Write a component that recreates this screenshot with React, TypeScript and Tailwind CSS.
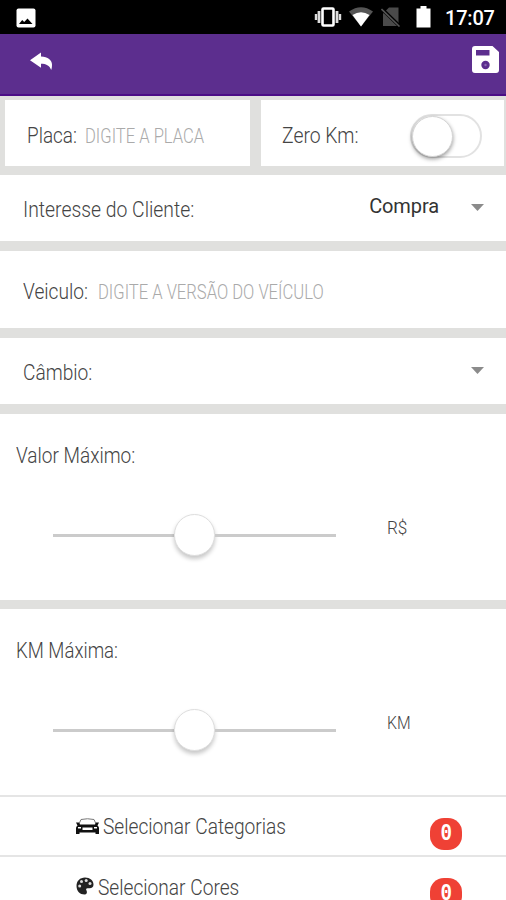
import type { ReactNode } from "react";

const condensed = "inline-block origin-left whitespace-nowrap font-light";

function Text({ className, children }: { className: string; children: ReactNode }) {
  return <span className={`${condensed} ${className}`}>{children}</span>;
}

function StatusBar() {
  return (
    <div className="flex h-[34px] shrink-0 items-center bg-black pl-4 pr-[11px] text-white">
      <svg className="mt-[1px] h-5 w-5" viewBox="0 0 20 20">
        <rect x="0.5" y="0.5" width="19" height="19" rx="2" fill="#fff" />
        <path d="M3 16 L6.2 12 L8.2 14 L11.5 10.5 L16.5 16 Z" fill="#000" />
      </svg>
      <div className="ml-auto flex items-center">
        <svg className="h-5 w-[28px]" viewBox="0 0 28 20">
          <rect x="8.5" y="1.5" width="11" height="17" rx="1" fill="none" stroke="#fff" strokeWidth="2.6" />
          <path d="M5 4V16M23 4V16" stroke="#ddd" strokeWidth="2.8" />
          <path d="M2 7V13M26 7V13" stroke="#ddd" strokeWidth="2.4" />
        </svg>
        <svg className="ml-[7px] h-5 w-6" viewBox="0 0 24 20">
          <path d="M0 4.5 Q12 -4 24 4.5 L12 19.5Z" fill="#555" />
          <path d="M3.5 8 Q12 2.5 20.5 8 L12 19.5Z" fill="#fff" />
        </svg>
        <svg className="ml-[8px] h-5 w-5" viewBox="0 0 20 20">
          <path d="M2 6.5 L8 0.5 H17.500 V19 H2Z" fill="#4a4a4a" />
          <path d="M1 2 L19 19.500" stroke="#000" strokeWidth="3.5" />
          <path d="M0.500 2 L18.500 19.500" stroke="#555" strokeWidth="1.600" />
        </svg>
        <svg className="ml-[15px] h-[22px] w-[15px]" viewBox="0 0 15 22">
          <path d="M0.500 2.500H4.500V0H10.500V2.500H14.500V21.500H0.500Z" fill="#fff" />
        </svg>
        <span className="ml-[14px] mt-[2px] w-[50px] whitespace-nowrap text-[20px] font-medium leading-6 tracking-[-0.2px]">17:07</span>
      </div>
    </div>
  );
}

function Header() {
  return (
    <header className="flex h-[62px] shrink-0 items-start justify-between border-b-2 border-[#4b0d86] bg-[#5c2e8e] pl-[30px] pr-[7px]">
      <svg className="mt-[18px] h-[19px] w-[23px]" viewBox="0 0 23 19">
        <path d="M0 8.300 L11 0.500 V4.500 C18 4.800 22 8.500 22 12.500 C22 14.500 21.800 16.500 21.200 18 C19.500 13.500 16 11.800 11 11.800 V15.800Z" fill="#fff" />
      </svg>
      <svg className="mt-[12px] h-[27px] w-[27px]" viewBox="0 0 27 27">
        <path fillRule="evenodd" fill="#fff" d="M3 0H20.500L27 6V24Q27 27 24 27H3Q0 27 0 24V3Q0 0 3 0ZM4 4V9.500H17.500V4ZM13.500 14.800A4.200 4.200 0 1 0 13.500 23.200A4.200 4.200 0 1 0 13.500 14.800Z" />
        <circle cx="13.500" cy="19" r="1.200" fill="#8a68b0" />
      </svg>
    </header>
  );
}

function Caret() {
  return (
    <svg className="h-[7px] w-[13px]" viewBox="0 0 13 7">
      <path d="M0 0H13L6.500 7Z" fill="#8b8b8b" />
    </svg>
  );
}

function Slider() {
  return (
    <div className="ml-[53px] flex h-[42px] w-[283px] items-center">
      <div className="h-[3px] w-[121px] bg-[#cbcbcb]" />
      <div className="h-[42px] w-[41px] rounded-full border border-[#dedede] bg-white shadow-[0_3px_4px_rgba(0,0,0,0.22)]" />
      <div className="h-[3px] flex-1 bg-[#cbcbcb]" />
    </div>
  );
}

function Badge() {
  return (
    <div className="flex h-8 w-8 items-start justify-center rounded-[14px] bg-[#ef4135] font-['Liberation_Mono',monospace] text-[24px] font-bold leading-[31px] text-white">
      <span className="inline-block scale-x-[0.8]">0</span>
    </div>
  );
}

export default function App() {
  return (
    <div className="flex h-[900px] w-[506px] flex-col overflow-hidden bg-[#e0e0de] font-['Roboto',sans-serif] text-[22px] leading-6 text-[#444]">
      <StatusBar />
      <Header />

      <div className="mt-[4px] flex h-[66px] shrink-0 gap-[11px] pl-[5px] pr-[2px]">
        <div className="flex w-[245px] bg-white pl-[22px] pt-[24px]">
          <div className="w-[58px]"><Text className="scale-x-[0.86]">Placa:</Text></div>
          <Text className="scale-x-[0.79] text-[21px] text-[#aaa]">DIGITE A PLACA</Text>
        </div>
        <div className="flex flex-1 justify-between bg-white pl-[21px] pr-[22px]">
          <Text className="mt-[24px] scale-x-[0.88]">Zero Km:</Text>
          <div className="mt-[14px] h-[44px] w-[72px] rounded-full border-2 border-[#e2e2e2] bg-white">
            <div className="h-[41px] w-[41px] rounded-full border border-[#d5d5d5] bg-white shadow-[0_2px_4px_rgba(0,0,0,0.4)]" />
          </div>
        </div>
      </div>

      <div className="mt-[9px] flex h-[66px] shrink-0 bg-white pl-[23px] pr-[22px]">
        <Text className="mt-[23px] scale-x-[0.88]">Interesse do Cliente:</Text>
        <div className="ml-auto flex">
          <span className="mr-[32px] mt-[19px] text-[20px] tracking-[-0.1px] text-[#333]">Compra</span>
          <div className="pt-[29px]"><Caret /></div>
        </div>
      </div>

      <div className="mt-[10px] flex h-[77px] shrink-0 bg-white pl-[23px] pt-[29px]">
        <div className="w-[75px]"><Text className="scale-x-[0.87]">Veiculo:</Text></div>
        <Text className="scale-x-[0.79] text-[21px] text-[#aaa]">DIGITE A VERSÃO DO VEÍCULO</Text>
      </div>

      <div className="mt-[10px] flex h-[66px] shrink-0 justify-between bg-white pl-[23px] pr-[22px]">
        <Text className="mt-[23px] scale-x-[0.87]">Câmbio:</Text>
        <div className="pt-[29px]"><Caret /></div>
      </div>

      <section className="mt-[10px] h-[186px] shrink-0 bg-white pt-[30px]">
        <div className="h-[70px] pl-4"><Text className="scale-x-[0.865]">Valor Máximo:</Text></div>
        <div className="flex">
          <Slider />
          <Text className="ml-[51px] mt-[2px] scale-x-[0.9] text-[19px]">R$</Text>
        </div>
      </section>

      <section className="mt-[9px] h-[186px] shrink-0 bg-white pt-[30px]">
        <div className="h-[70px] pl-4"><Text className="scale-x-[0.845]">KM Máxima:</Text></div>
        <div className="flex">
          <Slider />
          <Text className="ml-[51px] mt-[2px] scale-x-[0.83] text-[19px]">KM</Text>
        </div>
      </section>

      <div className="flex h-[60px] shrink-0 border-t-2 border-[#e5e5e5] bg-white pl-[76px] pr-[44px]">
        <svg className="mr-[4px] mt-[21px] h-[17px] w-[23px]" viewBox="0 0 23 17">
          <path d="M2.500 7 L5 1.500 Q11.500 0 18 1.500 L20.500 7" fill="none" stroke="#777" strokeWidth="1" />
          <path fillRule="evenodd" d="M0 4.500H3L4 6.500H19L20 4.500H23L21.500 7.500Q23 8.500 23 10V16H19.500V14.500H3.500V16H0V10Q0 8.500 1.500 7.500ZM6.500 9.500V12H16.500V9.500ZM2 9V10.500H5V9ZM18 9V10.500H21V9Z" fill="#111" />
        </svg>
        <Text className="mt-[18px] scale-x-[0.87]">Selecionar Categorias</Text>
        <div className="ml-auto mt-[21px]"><Badge /></div>
      </div>

      <div className="flex h-[60px] shrink-0 border-t-2 border-[#e5e5e5] bg-white pl-[76px] pr-[44px]">
        <svg className="mr-[4px] mt-[20px] h-[18px] w-[18px]" viewBox="0 0 18 18">
          <path d="M9 0.500C14 0.500 17.500 3.500 17.500 7.500C17.500 10 16 11.200 13.500 11.200H11.500C10 11.200 9.800 12.500 10.500 13.500C11.500 15.500 10.800 17.500 8.500 17.500C4 17.500 0.500 14 0.500 9S4 0.500 9 0.500Z" fill="#222" />
          <g fill="#ddd">
            <circle cx="3.700" cy="9" r="1.500" />
            <circle cx="5.500" cy="4.600" r="1.500" />
            <circle cx="10.200" cy="3.500" r="1.500" />
            <circle cx="14" cy="6.600" r="1.500" />
          </g>
        </svg>
        <Text className="mt-[19px] scale-x-[0.87]">Selecionar Cores</Text>
        <div className="ml-auto mt-[21px]"><Badge /></div>
      </div>
    </div>
  );
}
